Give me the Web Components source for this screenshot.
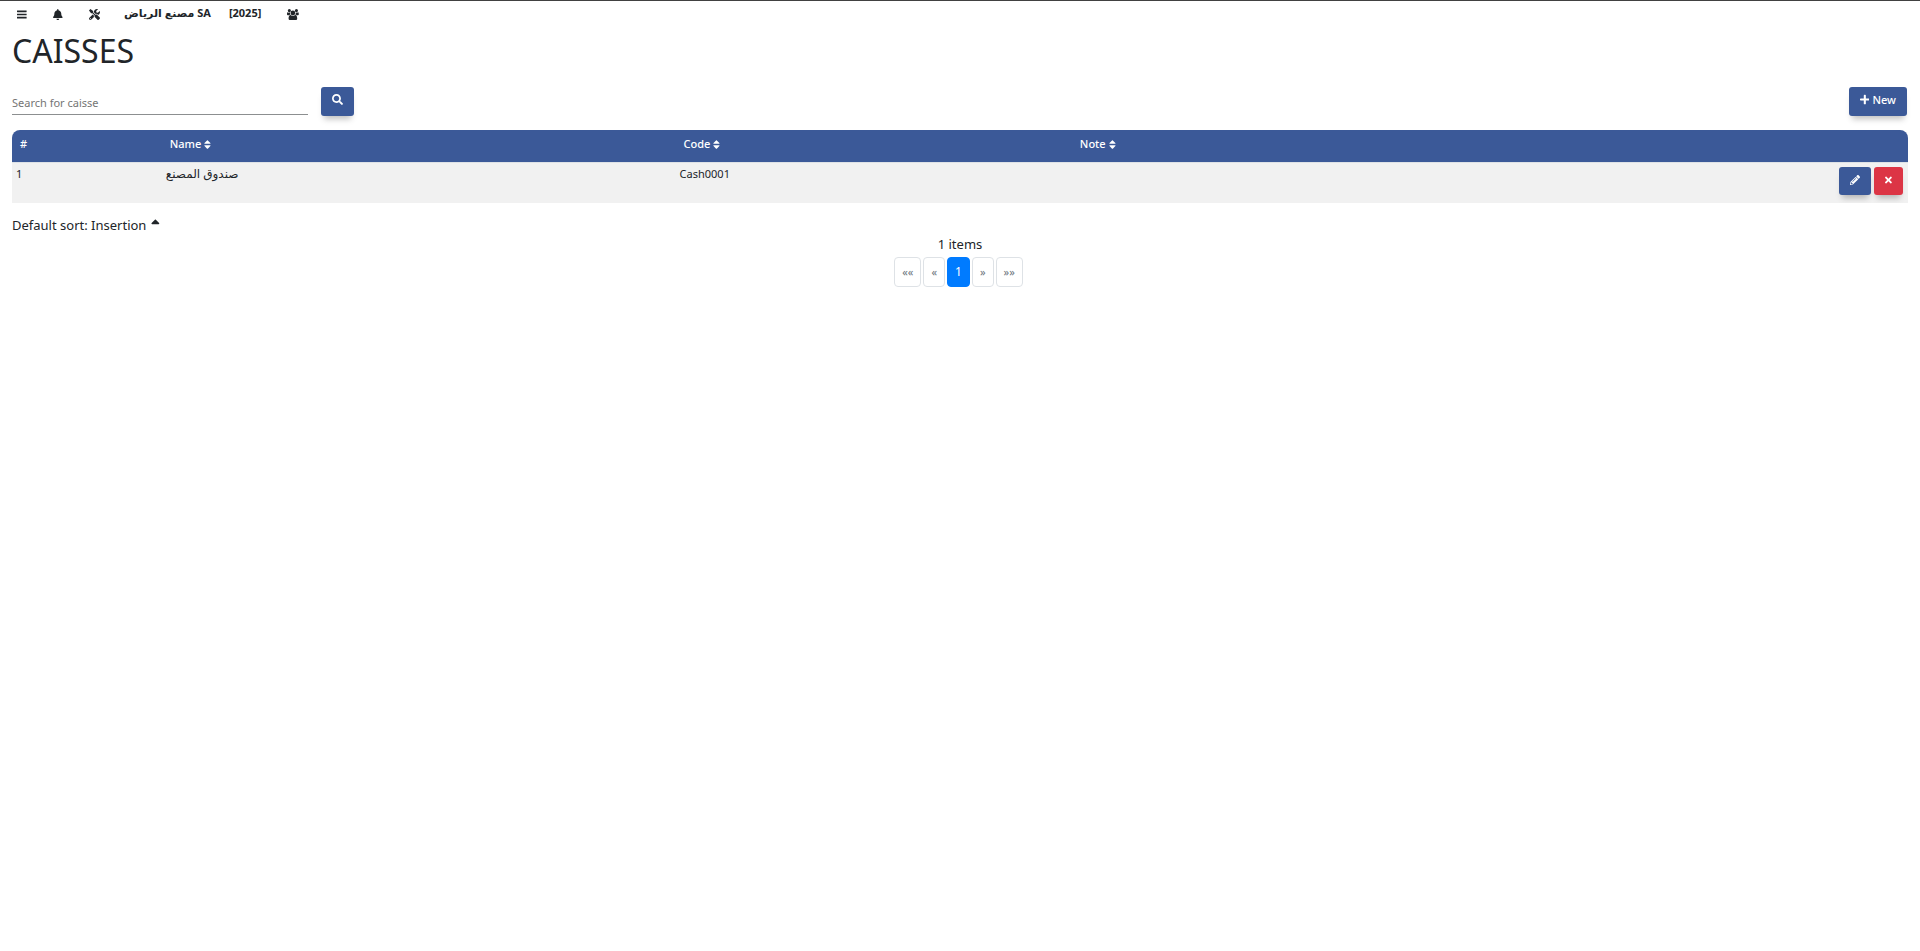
<!DOCTYPE html>
<html lang="en">
<head>
<meta charset="utf-8">
<meta name="viewport" content="width=device-width, initial-scale=1">
<title>Caisses</title>
<style>
  body { margin: 0; background: #fff; color: #212529; font-family: "Noto Sans", "DejaVu Sans", sans-serif; font-size: 13px; line-height: 20px; }
</style>
</head>
<body>
<caisse-app></caisse-app>
<script>
const ICONS = {
  bars: ['0 0 448 512', 'M16 148h416c9 0 16-7 16-16V84c0-9-7-16-16-16H16c-9 0-16 7-16 16v48c0 9 7 16 16 16zm0 148h416c9 0 16-7 16-16v-48c0-9-7-16-16-16H16c-9 0-16 7-16 16v48c0 9 7 16 16 16zm0 148h416c9 0 16-7 16-16v-48c0-9-7-16-16-16H16c-9 0-16 7-16 16v48c0 9 7 16 16 16z'],
  bell: ['0 0 448 512', 'M224 512c35.32 0 63.97-28.65 63.97-64H160.03c0 35.35 28.65 64 63.97 64zm215.39-149.71c-19.32-20.76-55.47-51.99-55.47-154.29 0-77.7-54.48-139.9-127.94-155.16V32c0-17.67-14.32-32-31.98-32s-31.98 14.33-31.98 32v20.84C118.56 68.1 64.08 130.3 64.08 208c0 102.3-36.15 133.53-55.47 154.29-6 6.45-8.66 14.16-8.61 21.71.11 16.4 12.98 32 32.1 32h383.8c19.12 0 32-15.6 32.1-32 .05-7.55-2.61-15.27-8.61-21.71z'],
  tools: ['0 0 512 512', 'M501.1 395.7L384 278.6c-23.1-23.1-57.6-27.6-85.4-13.9L192 158.1V96L64 0 0 64l96 128h62.1l106.6 106.6c-13.6 27.8-9.2 62.3 13.9 85.4l117.1 117.1c14.6 14.6 38.2 14.6 52.7 0l52.7-52.7c14.5-14.6 14.5-38.2 0-52.7zM331.7 225c28.3 0 54.9 11 74.9 31l19.4 19.4c15.8-6.9 30.8-16.5 43.8-29.5 37.1-37.1 49.7-89.3 37.9-136.7-2.2-9-13.5-12.1-20.1-5.5l-74.4 74.4-67.9-11.3L334 98.9l74.4-74.4c6.6-6.6 3.4-17.9-5.7-20.2-47.4-11.7-99.6.9-136.6 37.9-28.5 28.5-41.9 66.1-41.2 103.6l82.1 82.1c8.1-1.9 16.5-2.9 24.7-2.9zm-103.9 82l-56.7-56.7L18.7 402.8c-25 25-25 65.5 0 90.5s65.5 25 90.5 0l123.6-123.6c-7.6-19.9-9.9-41.6-5-62.7zM64 472c-13.2 0-24-10.8-24-24 0-13.3 10.7-24 24-24s24 10.7 24 24c0 13.2-10.7 24-24 24z'],
  users: ['0 0 480 448', 'M148 224c-27 1-51 12-68 32H45c-24 0-45-12-45-38 0-20-1-86 29-86 5 0 30 20 61 20 11 0 21-2 31-5-1 5-1 10-1 15 0 22 7 44 28 62zM416 383c0 41-27 65-67 65H131c-40 0-67-24-67-65 0-56 13-143 86-143 9 0 40 34 90 34s81-34 90-34c73 0 86 87 86 143zM160 64a64 64 0 1 1-128 0 64 64 0 0 1 128 0zM336 160a96 96 0 1 1-192 0 96 96 0 0 1 192 0zM480 218c0 26-21 38-45 38h-35c-17-20-41-31-68-32 21-18 28-40 28-62 0-5 0-10-1-15 10 3 20 5 31 5 31 0 56-20 61-20 30 0 29 66 29 86zM448 64a64 64 0 1 1-128 0 64 64 0 0 1 128 0z'],
  search: ['0 0 512 512', 'M505 442.7L405.3 343c-4.5-4.5-10.6-7-17-7H372c27.6-35.3 44-79.7 44-128C416 93.1 322.9 0 208 0S0 93.1 0 208s93.1 208 208 208c48.3 0 92.7-16.4 128-44v16.3c0 6.4 2.5 12.5 7 17l99.7 99.7c9.4 9.4 24.6 9.4 33.9 0l28.3-28.3c9.4-9.4 9.4-24.6.1-34zM208 336c-70.7 0-128-57.2-128-128 0-70.7 57.2-128 128-128 70.7 0 128 57.2 128 128 0 70.7-57.2 128-128 128z'],
  plus: ['0 0 448 512', 'M416 208H272V64c0-17.7-14.3-32-32-32h-32c-17.7 0-32 14.3-32 32v144H32c-17.7 0-32 14.3-32 32v32c0 17.7 14.3 32 32 32h144v144c0 17.7 14.3 32 32 32h32c17.7 0 32-14.3 32-32V304h144c17.7 0 32-14.3 32-32v-32c0-17.7-14.3-32-32-32z'],
  sort: ['0 0 320 512', 'M41 288h238c21.4 0 32.1 25.9 17 41L177 448c-9.4 9.4-24.6 9.4-33.9 0L24 329c-15.1-15.1-4.4-41 17-41zm255-105L177 64c-9.4-9.4-24.6-9.4-33.9 0L24 183c-15.1 15.1-4.4 41 17 41h238c21.4 0 32.1-25.9 17-41z'],
  up: ['0 0 320 512', 'M279 224H41c-21.4 0-32.1-25.9-17-41L143 64c9.4-9.4 24.6-9.4 33.9 0l119 119c15.2 15.1 4.5 41-16.9 41z'],
  pencil: ['0 0 512 512', 'M498 142l-46 46c-5 5-12 5-17 0L324 77c-5-5-5-12 0-17l46-46c19-19 49-19 68 0l60 60c19 19 19 49 0 68zM284 100L22 362 0 484c-3 16 12 31 28 28l122-21 262-263c5-5 5-12 0-17L301 100c-5-5-12-5-17 0zM124 340c-5-6-5-14 0-20l154-154c6-5 14-5 20 0s5 14 0 20L144 340c-6 5-14 5-20 0zm-36 84h48v36l-65 12-31-31 12-65h36v48z'],
  times: ['0 0 352 512', 'M243 256l100-100c12-12 12-32 0-45l-22-22c-12-12-32-12-45 0L176 189 76 89c-12-12-32-12-45 0L9 111c-12 13-12 33 0 45l100 100L9 356c-12 12-12 32 0 45l22 22c13 12 33 12 45 0l100-100 100 100c13 12 33 12 45 0l22-22c12-13 12-33 0-45L243 256z']
};

function define(name, html, setup) {
  const template = document.createElement('template');
  template.innerHTML = html;
  customElements.define(name, class extends HTMLElement {
    constructor() {
      super();
      this.attachShadow({ mode: 'open' }).append(template.content.cloneNode(true));
    }
    connectedCallback() { if (setup) setup(this, this.shadowRoot); }
  });
}

define('app-icon', `
  <style>
    :host { display: inline-flex; flex: none; height: 11px; }
    svg { display: block; height: 100%; width: auto; fill: currentColor; }
  </style>
  <svg aria-hidden="true"><path/></svg>`,
  (host, root) => {
    const [box, d] = ICONS[host.getAttribute('name')];
    root.querySelector('svg').setAttribute('viewBox', box);
    root.querySelector('path').setAttribute('d', d);
  });

define('app-button', `
  <style>
    :host { display: inline-flex; }
    button { display: flex; justify-content: center; align-items: flex-start; gap: 3px; box-sizing: border-box;
      height: 29px; padding: 4px 11px; border: 0; border-radius: 3px; background: #3b5998; color: #fff;
      font: 500 11px/18px "Noto Sans", sans-serif; box-shadow: 0 6px 6px -3px rgba(0,0,0,.25); cursor: pointer; }
    :host([icon-only]) button { padding: 7px 11px; }
    :host([small]) button { height: 28px; }
    :host([danger]) button { background: #dc3545; }
    ::slotted(app-icon) { margin-top: 3px; }
    :host([icon-only]) ::slotted(app-icon) { margin-top: 0; }
    :host([small]) ::slotted(app-icon) { height: 10px; margin-top: 1px; }
  </style>
  <button type="button"><slot></slot></button>`,
  (host, root) => {
    if (host.title) root.querySelector('button').setAttribute('aria-label', host.title);
  });

define('app-navbar', `
  <style>
    :host { display: block; border-top: 1px solid #414141; }
    nav { display: flex; align-items: center; height: 24px; padding: 0 17px; }
    a { display: flex; align-items: center; color: inherit; text-decoration: none; font-size: 11px; line-height: 20px; font-weight: 700; height: 22px; }
    .menu { width: 36px; }
    .company { margin-left: -1px; padding-right: 18px; }
    .year { padding-right: 26px; }
    a app-icon { margin-top: 2px; }
  </style>
  <nav aria-label="Main">
    <a class="menu" href="#menu" aria-label="Menu"><app-icon name="bars"></app-icon></a>
    <a class="menu" href="#alerts" aria-label="Notifications"><app-icon name="bell"></app-icon></a>
    <a class="menu" href="#tools" aria-label="Tools"><app-icon name="tools"></app-icon></a>
    <a class="company" href="#company">مصنع الرياض SA</a>
    <a class="year" href="#year">[2025]</a>
    <a href="#users" aria-label="Users"><app-icon name="users"></app-icon></a>
  </nav>`);

define('search-bar', `
  <style>
    :host { display: flex; justify-content: space-between; align-items: flex-start; padding-right: 1px; }
    form { display: flex; align-items: flex-start; gap: 13px; }
    input { width: 296px; height: 28px; box-sizing: border-box; padding: 4px 0 0; border: 0; border-bottom: 1px solid #8c8f90;
      outline: 0; background: none; color: inherit; font: 11px/18px "Noto Sans", "DejaVu Sans", sans-serif; }
    input::placeholder { color: #757575; opacity: 1; }
  </style>
  <form role="search">
    <input type="text" aria-label="Search for caisse" placeholder="Search for caisse">
    <app-button icon-only title="Search"><app-icon name="search"></app-icon></app-button>
  </form>
  <app-button><app-icon name="plus"></app-icon>New</app-button>`);

define('caisse-table', `
  <style>
    :host { display: block; overflow: hidden; border-radius: 8px 8px 0 0; }
    table { width: 100%; table-layout: fixed; border-collapse: collapse; font-size: 11px; line-height: 18px; }
    .number { width: 7.9%; } .name { width: 27.1%; } .code { width: 20.9%; }
    th { height: 32px; box-sizing: border-box; padding: 5px 8px 9px; border-bottom: 1px solid #dee2e6; background: #3b5998;
      color: #fff; text-align: left; font-weight: 500; vertical-align: top; }
    th button { display: inline-flex; align-items: center; gap: 3px; padding: 0; border: 0; background: none; color: inherit; font: inherit; cursor: pointer; }
    td { height: 40px; box-sizing: border-box; padding: 2px 4px; background: #f1f1f1; vertical-align: top; }
    td:lang(ar) { font-size: 12px; }
    .actions { display: flex; justify-content: flex-end; gap: 3px; padding: 2px 1px 0 0; }
  </style>
  <table>
    <colgroup><col class="number"><col class="name"><col class="code"><col><col></colgroup>
    <thead><tr>
      <th scope="col">#</th>
      <th scope="col"><button type="button">Name<app-icon name="sort"></app-icon></button></th>
      <th scope="col"><button type="button">Code<app-icon name="sort"></app-icon></button></th>
      <th scope="col"><button type="button">Note<app-icon name="sort"></app-icon></button></th>
      <th></th>
    </tr></thead>
    <tbody><tr>
      <td>1</td><td lang="ar">صندوق المصنع</td><td>Cash0001</td><td></td>
      <td><div class="actions">
        <app-button icon-only small title="Edit"><app-icon name="pencil"></app-icon></app-button>
        <app-button icon-only small danger title="Delete"><app-icon name="times"></app-icon></app-button>
      </div></td>
    </tr></tbody>
  </table>`);

define('app-pager', `
  <style>
    :host { display: flex; flex-direction: column; align-items: center; }
    span { line-height: 18px; }
    ul { display: flex; gap: 2px; margin: 4px 0 0; padding: 0 3px 0 0; list-style: none; }
    a { display: block; box-sizing: border-box; height: 30px; padding: 5px 7px; border: 1px solid #dee2e6; border-radius: 4px;
      color: #6c757d; background: #fff; text-decoration: none; font-size: 11px; line-height: 18px; }
    a[aria-current] { border-color: #007bff; background: #007bff; color: #fff; font-size: 12px; }
  </style>
  <span>1 items</span>
  <ul>
    <li><a href="#first">««</a></li><li><a href="#previous">«</a></li>
    <li><a href="#1" aria-current="page">1</a></li>
    <li><a href="#next">»</a></li><li><a href="#last">»»</a></li>
  </ul>`);

define('caisse-app', `
  <style>
    :host { display: block; }
    main { padding: 0 12px; }
    h1 { margin: 0; font-size: 32px; line-height: 40px; font-weight: 400; padding: 6px 0 16px; }
    caisse-table { margin-top: 14px; }
    .sort { display: flex; align-items: center; gap: 5px; margin-top: 12px; padding: 0; border: 0; background: none; color: inherit;
      font: 13px/20px "Noto Sans", sans-serif; cursor: pointer; }
    .sort app-icon { height: 14px; }
  </style>
  <app-navbar></app-navbar>
  <main>
    <h1>CAISSES</h1>
    <search-bar></search-bar>
    <caisse-table></caisse-table>
    <button class="sort" type="button">Default sort: Insertion <app-icon name="up"></app-icon></button>
    <app-pager></app-pager>
  </main>`);
</script>
</body>
</html>
